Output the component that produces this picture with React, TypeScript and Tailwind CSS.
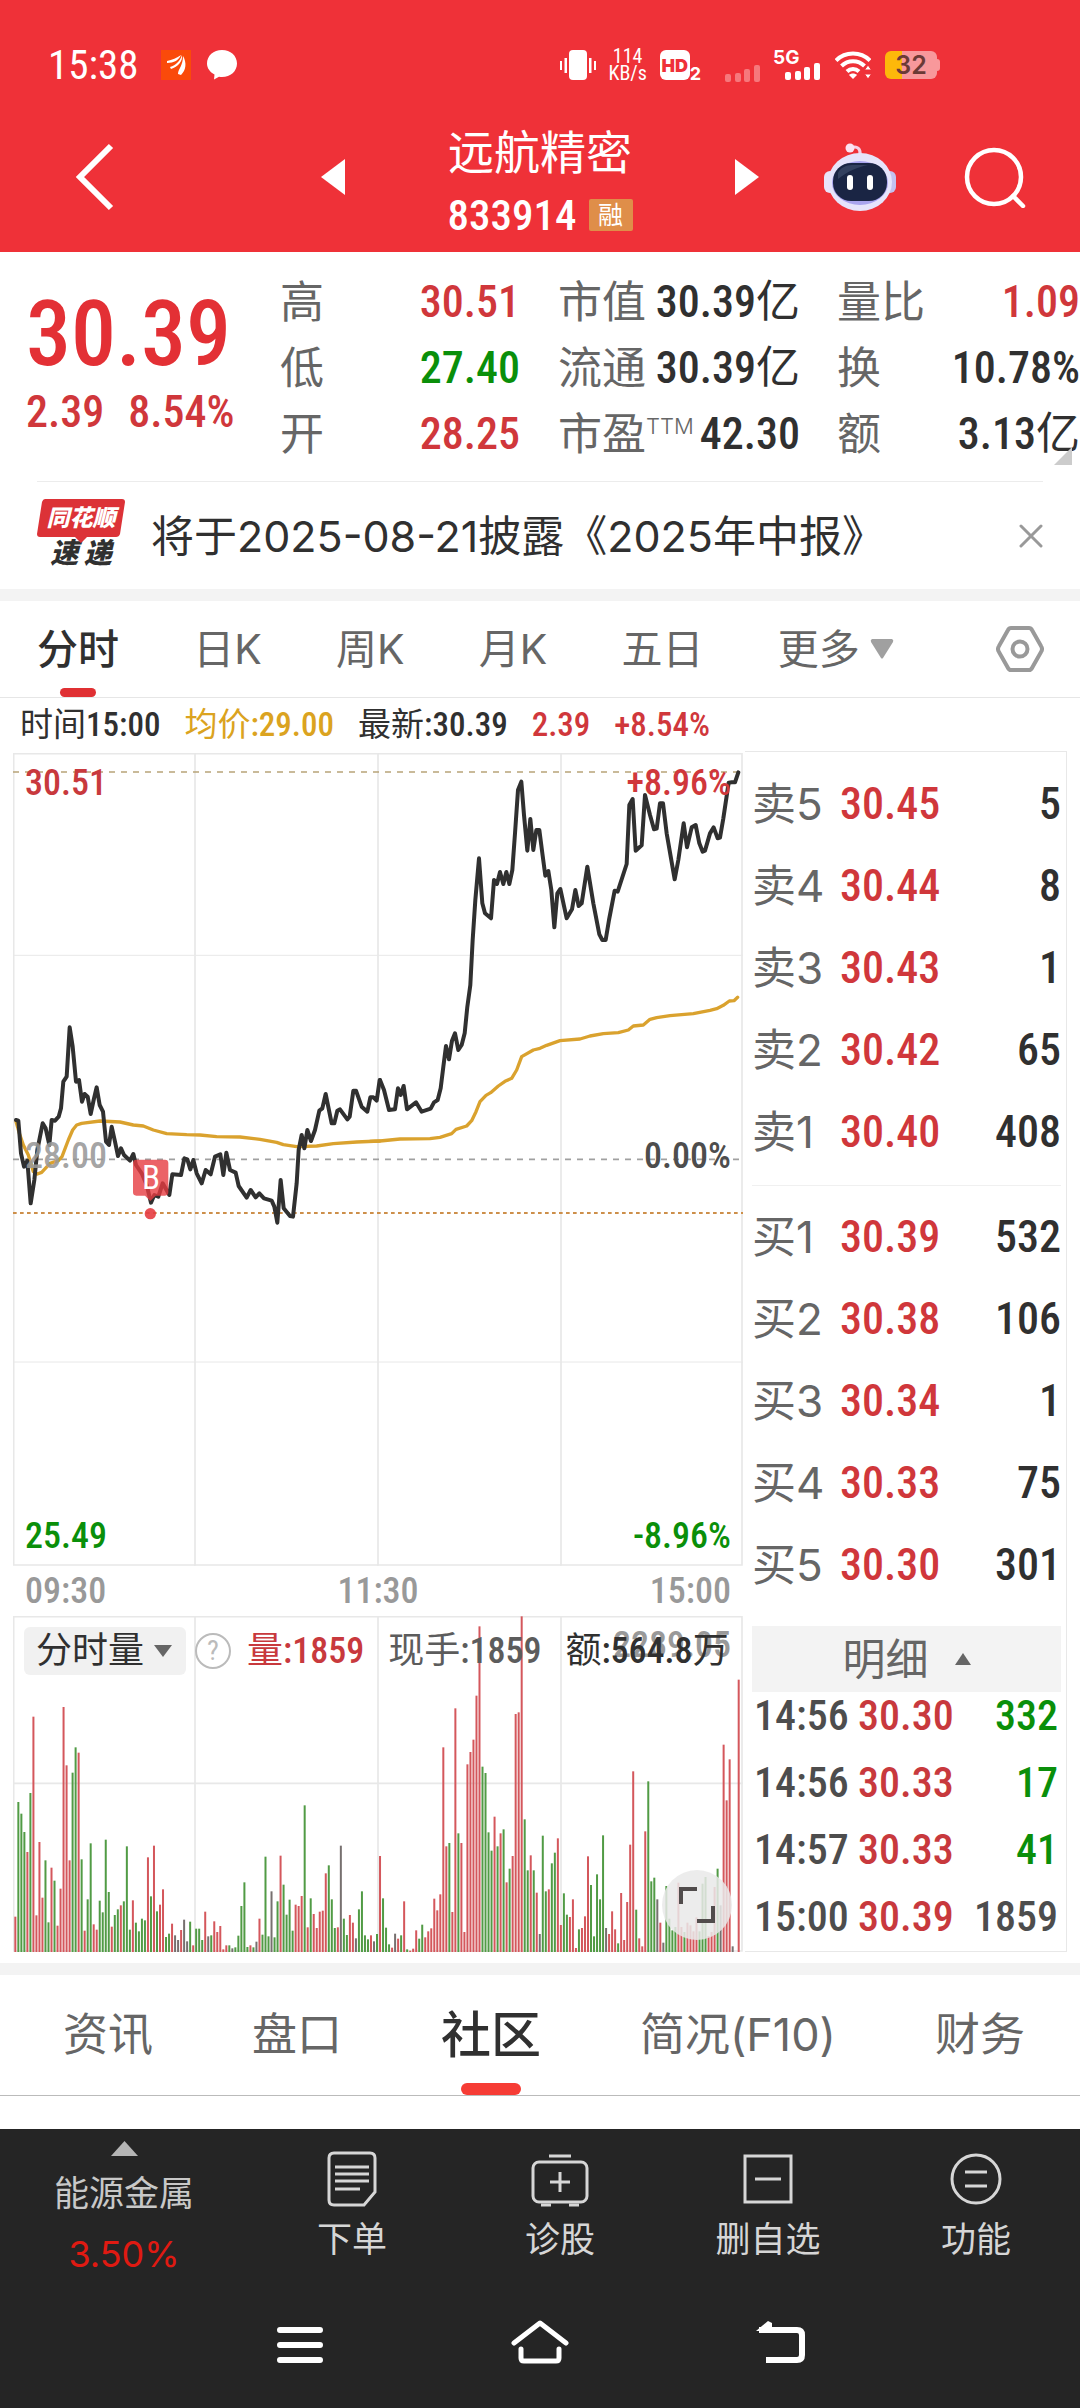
import React from 'react';

const NUM = "font-[family-name:'Roboto_Condensed','Liberation_Sans_Narrow',Roboto,'Noto_Sans_CJK_SC',sans-serif]";

const PERIODS = ['日K', '周K', '月K', '五日'];

const SELLS = [
  ['卖5', '30.45', '5'],
  ['卖4', '30.44', '8'],
  ['卖3', '30.43', '1'],
  ['卖2', '30.42', '65'],
  ['卖1', '30.40', '408'],
];

const BUYS = [
  ['买1', '30.39', '532'],
  ['买2', '30.38', '106'],
  ['买3', '30.34', '1'],
  ['买4', '30.33', '75'],
  ['买5', '30.30', '301'],
];

const TRADES = [
  { time: '14:56', price: '30.30', volume: '332', tone: 'text-[#0a8f0a]' },
  { time: '14:56', price: '30.33', volume: '17', tone: 'text-[#0a8f0a]' },
  { time: '14:57', price: '30.33', volume: '41', tone: 'text-[#0a8f0a]' },
  { time: '15:00', price: '30.39', volume: '1859', tone: 'text-[#4d4d4d]' },
];

// Price and average lines, one polyline per trading session
const PRICE_AM =
  '48,1140 55,1142 63,1240 72,1280 82,1262 92,1390 103,1320 112,1230 120,1190 128,1150 137,1165 148,1215 155,1140 165,1142 176,1130 183,1105 190,1025 200,1010 209,862 218,920 228,1025 237,1020 246,1085 254,1062 263,1070 272,1122 281,1080 290,1042 299,1095 309,1115 318,1205 327,1215 335,1160 345,1205 354,1248 363,1225 372,1245 390,1262 400,1242 408,1275 425,1300 440,1335 453,1388 463,1365 475,1370 488,1330 508,1365 517,1303 543,1305 553,1255 562,1258 571,1288 580,1260 590,1300 605,1330 617,1290 632,1303 645,1250 661,1243 670,1305 679,1238 690,1290 707,1298 716,1338 740,1373 752,1350 767,1372 778,1360 792,1375 815,1382 823,1400 832,1448 842,1320 851,1405 870,1428 879,1430 890,1330 896,1230 905,1185 913,1225 922,1170 933,1203 945,1170 958,1112 967,1105 977,1062 995,1150 1003,1150 1012,1112 1020,1108 1042,1138 1049,1130 1060,1052 1068,1052 1085,1100 1102,1115 1111,1072 1120,1072 1130,1082 1139,1020';
const PRICE_PM =
  '30,1020 42,1050 57,1110 75,1108 84,1045 92,1065 101,1038 111,1108 138,1087 155,1115 182,1106 192,1087 203,1080 212,1045 220,980 228,918 237,958 246,902 255,880 265,930 275,915 284,880 292,800 301,735 308,600 316,480 327,355 337,490 345,520 363,535 372,420 381,432 390,396 400,432 409,396 418,432 427,390 435,280 444,150 454,125 462,225 472,332 481,237 490,330 499,270 508,270 517,340 526,407 535,393 544,450 553,562 562,460 571,447 590,535 606,508 616,450 626,498 635,490 652,380 670,490 688,583 697,600 707,600 717,540 734,452 743,455 770,372 778,195 788,177 797,332 815,316 825,165 840,225 852,268 860,266 870,190 879,190 890,280 914,418 925,360 941,250 951,322 965,262 977,255 988,310 998,335 1005,332 1020,280 1031,262 1043,295 1050,293 1060,235 1076,128 1085,127 1095,127 1105,97';
const AVG_AM =
  '48,1145 58,1180 70,1215 85,1245 100,1295 112,1302 125,1297 150,1270 175,1262 186,1250 205,1200 218,1170 230,1155 245,1150 300,1143 360,1146 400,1155 430,1158 460,1170 500,1181 560,1184 600,1185 650,1190 720,1191 780,1198 830,1207 850,1214 890,1220 950,1218 1000,1211 1070,1206 1139,1203';
const AVG_PM =
  '0,1204 30,1203 90,1197 180,1196 210,1192 245,1181 258,1168 290,1158 305,1142 318,1115 330,1085 348,1066 362,1058 385,1038 405,1024 425,1015 440,990 455,950 490,930 510,925 530,916 570,902 630,897 660,888 700,881 745,878 775,870 790,858 820,855 840,838 860,833 900,827 970,821 1020,811 1040,806 1060,796 1078,783 1092,782 1103,772';

// One entry per minute: direction (r up, g down, k flat) and bar height
const VOLUME = `r106 g450 g415 g360 r300 g477 r706 r110 r330 r163 g275 g89 r253 g214 r79 r190 r735 r560 r275 g538
g614 r598 g278 r64 g158 g326 r83 r67 g154 g119 g337 g180 r76 g111 g128 r140 g152 g317 g67 r155
g88 g62 g100 g95 r284 g167 r319 g122 r142 r188 g45 g55 r85 k50 k36 r66 k97 k32 g91 r20
g70 g70 g36 r121 k47 g50 r92 r60 r78 r8 r20 g20 k11 g14 g49 g138 g209 g15 r20 g14
k31 r100 g52 g286 g47 k182 g44 g152 r289 g202 g112 g157 g64 r142 r138 r168 g440 r74 g161 r114
r72 r121 r124 r236 g260 g158 g72 r74 k319 g100 g51 r111 r88 k41 g128 g182 g50 g38 r50 k32
g54 r288 g161 g73 g23 r13 k55 r40 g50 r152 g8 r4 r10 r65 g40 g82 r44 r62 r71 r160
r125 r173 r614 r317 g327 r120 r731 g356 r327 r60 r563 r600 r637 r769 r977 g556 g537 g359 g304 r406
g317 r356 g368 r209 g250 r288 r714 r719 r1007 g398 g245 r290 g245 r178 k54 g349 g182 r188 g266 g298
r341 r81 g176 g112 r105 r158 r12 g68 r72 r107 r287 g201 g47 g233 g158 g350 k72 r54 r122 r68
g26 r177 r36 r150 r322 r542 g127 r41 r17 r362 g512 g212 g223 k158 r88 k28 g198 g100 g65 g75
r208 r75 g60 r88 r80 r62 r104 g62 g205 g225 r48 r60 r195 g250 k140 r622 r455 r578 k17 k0 r817`
  .split(/\s+/)
  .map((item) => ({ dir: item[0], height: Number(item.slice(1)) }));

const BAR_COLORS: Record<string, string> = { r: '#d4575c', g: '#519b45', k: '#77706f' };

const StatusBar: React.FC = () => (
  <div className="flex h-[92px] items-center justify-between pt-[38px] pr-[140px] pl-12">
    <div className="flex items-center">
      <span className={`${NUM} w-[113px] text-[41px] leading-[44px] text-white`}>15:38</span>
      <svg className="mr-4 h-[30px] w-[30px]" viewBox="0 0 30 30">
        <rect width="30" height="30" fill="#fa4a0a" />
        <path d="M6 11c5-1 10-3 14-6-2 5-7 8-14 8zM9 17c6-2 10-6 12-12 1 6-4 12-11 14zM17 24c0-5 5-8 5-18 4 7 3 14-2 19z" fill="#fff" />
      </svg>
      <svg className="h-[30px] w-[30px]" viewBox="0 0 30 30" fill="#fff">
        <path d="M15 0c8.500 0 15 5.800 15 13.500S23.500 27 15 27c-1 0-2-.1-3-.3L7 29.500l.5-5C3 22 0 18.200 0 13.500 0 5.800 6.500 0 15 0z" />
      </svg>
    </div>
    <div className="flex items-center">
      <svg className="mr-3.5 h-[30px] w-9" viewBox="0 0 36 30" fill="#fff">
        <rect x="9" width="18" height="30" rx="4" />
        <path d="M0 11h2v9H0zM4.500 8H7v15H4.500zM29 8h2.500v15H29zM34 11h2v9h-2z" />
      </svg>
      <div className={`${NUM} mr-3.5 flex w-9 flex-col items-center text-[20px] leading-[17px] text-white`}>
        <span>114</span>
        <span>KB/s</span>
      </div>
      <span className="flex h-[30px] w-[30px] items-center justify-center rounded-md bg-white text-[18px] font-black text-[#ef3138]">HD</span>
      <span className="mr-6 self-end text-[18px] leading-4 font-bold text-white">2</span>
      <svg className="mr-3 h-[17px] w-9 self-end" viewBox="0 0 36 17" fill="#f6787c">
        <rect y="9" width="6" height="8" rx="2" />
        <rect x="10" y="8" width="6" height="9" rx="2" />
        <rect x="19" y="4" width="6" height="13" rx="2" />
        <rect x="29" width="6" height="17" rx="2" />
      </svg>
      <div className="relative mr-3.5 h-[30px] w-12">
        <span className="absolute top-0 left-0 text-[19px] leading-4 font-bold text-white">5G</span>
        <svg className="absolute right-0 bottom-0 h-[17px] w-9" viewBox="0 0 36 17" fill="#fff">
          <rect y="9" width="6" height="8" rx="2" />
          <rect x="10" y="8" width="6" height="9" rx="2" />
          <rect x="19" y="4" width="6" height="13" rx="2" />
          <rect x="29" width="6" height="17" rx="2" />
        </svg>
      </div>
      <svg className="mr-3.5 h-7 w-9" viewBox="0 0 36 28" fill="none" stroke="#fff" strokeWidth="4">
        <path d="M1 9.500C10 0 26 0 35 9.500" />
        <path d="M6.500 15c6.500-6.500 16.500-6.500 23 0" />
        <path d="M12 20.500c3.500-3.500 8.500-3.500 12 0" />
        <path d="M14 24l4 4 4-4c-2-2-6-2-8 0z" fill="#fff" stroke="none" />
        <path d="M33 14l3.500 5h-7zM33 28l3.500-5h-7z" fill="#fff" stroke="#ef3138" strokeWidth="1" />
      </svg>
      <div className="flex items-center">
        <span className="flex h-7 w-[52px] items-center justify-center rounded-md bg-linear-to-r from-[#fdb80a] from-33% to-[#f8989b] to-33% text-[25px] leading-7 font-semibold text-[#6b3a36]">32</span>
        <span className="h-3 w-[3px] rounded-r-sm bg-[#f8989b]" />
      </div>
    </div>
  </div>
);

const NavBar: React.FC = () => (
  <div className="flex h-40 items-center justify-between pt-2.5 pr-[54px] pl-[75px]">
    <button aria-label="返回" className="flex w-[181px] items-center">
      <svg className="h-[68px] w-10" viewBox="0 0 40 68" fill="none" stroke="#fff" strokeWidth="6">
        <path d="M36 3L5 34l31 31" />
      </svg>
    </button>
    <div className="flex items-center gap-[100px]">
      <button aria-label="上一只">
        <svg className="h-9 w-6" viewBox="0 0 24 36" fill="#fff">
          <path d="M24 0v36L0 18z" />
        </svg>
      </button>
      <div className="flex w-[190px] flex-col items-center pt-4">
        <h1 className="text-[46px] leading-[60px] text-white">远航精密</h1>
        <div className="flex items-center gap-3">
          <span className={`${NUM} text-[43px] leading-[66px] font-medium text-white`}>833914</span>
          <span className="flex h-8 w-11 items-center justify-center rounded-xs bg-[#df8e49] text-[25px] leading-8 text-white">融</span>
        </div>
      </div>
      <button aria-label="下一只">
        <svg className="h-9 w-6" viewBox="0 0 24 36" fill="#fff">
          <path d="M0 0v36l24-18z" />
        </svg>
      </button>
    </div>
    <div className="flex items-center gap-[68px]">
      <button aria-label="智能助手">
        <svg className="h-[68px] w-[72px]" viewBox="0 0 72 68">
          <path d="M27 5c6-3 10 1 9 7" fill="none" stroke="#f6cfe6" strokeWidth="3" />
          <circle cx="26" cy="5" r="4.500" fill="#fbe3f2" />
          <rect y="28" width="12" height="22" rx="6" fill="#e9e4fa" />
          <rect x="60" y="28" width="12" height="22" rx="6" fill="#c3c2f0" />
          <ellipse cx="36" cy="39" rx="32" ry="29" fill="#e6e4fb" />
          <ellipse cx="36" cy="40" rx="28" ry="22" fill="#a9a4ee" />
          <rect x="9" y="20" width="54" height="38" rx="18" fill="#1a2544" />
          <path d="M14 30c2-5 8-8 14-8h16c-10 2-20 6-30 14z" fill="#33405f" />
          <rect x="23" y="32" width="6" height="15" rx="3" fill="#fff" />
          <rect x="43" y="32" width="6" height="15" rx="3" fill="#fff" />
        </svg>
      </button>
      <button aria-label="搜索">
        <svg className="h-[62px] w-[62px]" viewBox="0 0 62 62" fill="none" stroke="#fff" strokeWidth="4.500" strokeLinecap="round">
          <circle cx="30" cy="31" r="27" />
          <path d="M49 50l10 10" />
        </svg>
      </button>
    </div>
  </div>
);

const Stat: React.FC<{ label: React.ReactNode; value: string; unit?: string; tone?: string }> = ({
  label,
  value,
  unit,
  tone = 'text-[#303030]',
}) => (
  <div className="flex justify-between whitespace-nowrap">
    <dt className="flex text-[#666]">{label}</dt>
    <dd className={`${NUM} font-medium ${tone}`}>
      {value}
      {unit && <span className="font-normal">{unit}</span>}
    </dd>
  </div>
);

const Quote: React.FC = () => (
  <section className="relative flex h-[229px] items-start pt-[17px] pl-[26px] text-[44px] leading-[66px]">
    <div className={`${NUM} w-[254px] pt-4 text-[#e33035]`}>
      <p className="text-[90px] leading-[100px] font-medium">30.39</p>
      <p className="flex gap-6 text-[44px] leading-[54px] font-medium text-[#d0373b]">
        <span>2.39</span>
        <span>8.54%</span>
      </p>
    </div>
    <dl className="w-[240px]">
      <Stat label="高" value="30.51" tone="text-[#d0373b]" />
      <Stat label="低" value="27.40" tone="text-[#0a8f0a]" />
      <Stat label="开" value="28.25" tone="text-[#d0373b]" />
    </dl>
    <dl className="ml-[38px] w-[242px]">
      <Stat label="市值" value="30.39" unit="亿" />
      <Stat label="流通" value="30.39" unit="亿" />
      <Stat label={<>市盈<span className="text-[22px] leading-[50px] font-light">TTM</span></>} value="42.30" />
    </dl>
    <dl className="ml-[37px] flex-1">
      <Stat label="量比" value="1.09" tone="text-[#d0373b]" />
      <Stat label="换" value="10.78%" />
      <Stat label="额" value="3.13" unit="亿" />
    </dl>
    <svg className="absolute right-2 bottom-4 h-[18px] w-[18px]" viewBox="0 0 18 18" fill="#ccc">
      <path d="M18 0v18H0z" />
    </svg>
  </section>
);

const NewsBanner: React.FC = () => (
  <section className="mx-[37px] flex h-[108px] items-center border-t border-[#ececec]">
    <div className="relative flex w-[88px] flex-col items-center pb-1">
      <svg className="absolute top-0 left-0 h-11 w-[88px]" viewBox="0 0 88 44" fill="#dc3237">
        <path d="M8 0h77q3 0 3 3l-5 32q-1 3-4 3H50l-6 6-6-6H3q-3 0-3-3L5 3q1-3 3-3z" />
      </svg>
      <span className="relative text-[23px] leading-[38px] font-black text-white italic">同花顺</span>
      <span className="text-[28px] leading-[32px] font-black text-[#303030] italic">速 递</span>
    </div>
    <p className="ml-[26px] flex-1 text-[43px] leading-[60px] whitespace-nowrap text-[#303030]">将于2025-08-21披露《2025年中报》</p>
    <button aria-label="关闭">
      <svg className="h-6 w-6" viewBox="0 0 24 24" stroke="#999" strokeWidth="3" strokeLinecap="round">
        <path d="M2 2l20 20M22 2L2 22" />
      </svg>
    </button>
  </section>
);

const PeriodTabs: React.FC = () => (
  <nav className="flex h-[97px] items-center justify-between border-b border-[#e6e6e6] pr-9 pl-[37px] text-[41px] leading-[60px] text-[#666]">
    <button className="relative flex h-full items-center font-medium text-[#303030]">
      分时
      <span className="absolute bottom-0 left-[23px] h-[9px] w-9 rounded-full bg-[#e03033]" />
    </button>
    {PERIODS.map((name) => (
      <button key={name}>{name}</button>
    ))}
    <button className="flex items-center gap-2.5">
      更多
      <svg className="h-5 w-6" viewBox="0 0 24 20" fill="#a0a0a0">
        <path d="M2 0h20q2 1 1 3L13 19q-1 1-2 0L1 3Q0 1 2 0z" />
      </svg>
    </button>
    <button aria-label="设置" className="ml-7">
      <svg className="h-12 w-12" viewBox="0 0 48 48" fill="none" stroke="#999" strokeWidth="4">
        <path d="M15 3h18q2 0 3 2l9 16q2 3 0 6l-9 16q-1 2-3 2H15q-2 0-3-2L3 27q-2-3 0-6l9-16q1-2 3-2z" />
        <circle cx="24" cy="24" r="7.500" />
      </svg>
    </button>
  </nav>
);

const PriceChart: React.FC = () => (
  <div className={`${NUM} relative text-[36px] leading-[42px] font-medium`}>
    <svg className="block h-[813px] w-full" viewBox="0 0 2190 2439" preserveAspectRatio="none" fill="none">
      <g stroke="#e8e8e8" strokeWidth="5">
        <path d="M2 2h2185v2434H2z" />
        <path d="M546 0v2438M1095 0v2438M1644 0v2438" />
        <path d="M0 607h2190M0 1827h2190" strokeWidth="3" />
      </g>
      <path d="M0 57h2190" stroke="#b8a478" strokeWidth="5" strokeDasharray="18 18" />
      <path d="M0 1219h2190" stroke="#a0a0a0" strokeWidth="5" strokeDasharray="18 18" />
      <path d="M0 1380h2190" stroke="#cd8f4a" strokeWidth="6" strokeDasharray="11 10" />
      <g strokeLinejoin="round" strokeLinecap="round">
        <g stroke="#daa22e" strokeWidth="10">
          <polyline points={AVG_AM} transform="translate(-39 -39)" />
          <polyline points={AVG_PM} transform="translate(1071 -39)" />
        </g>
        <g stroke="#303030" strokeWidth="12">
          <polyline points={PRICE_AM} transform="translate(-39 -39)" />
          <polyline points={PRICE_PM} transform="translate(1071 -39)" />
        </g>
      </g>
      <g fill="#e63c41">
        <path d="M370 1220h86q10 0 10 10v88q0 10-10 10h-28l-16 16-16-16h-26q-10 0-10-10v-88q0-10 10-10z" fillOpacity="0.8" />
        <circle cx="412" cy="1382" r="17" fillOpacity="0.9" />
      </g>
    </svg>
    <span className="absolute top-[407px] left-[120px] w-9 text-center text-[33px] leading-9 font-normal text-white">B</span>
    <span className="absolute top-[9px] left-3 text-[#c8393d]">30.51</span>
    <span className="absolute top-[9px] right-3 text-[#d0373b]">+8.96%</span>
    <span className="absolute top-[382px] left-3 text-[#999]/90">28.00</span>
    <span className="absolute top-[382px] right-3 text-[#4d4d4d]">0.00%</span>
    <span className="absolute bottom-[9px] left-3 text-[#0a8f0a]">25.49</span>
    <span className="absolute right-3 bottom-[9px] text-[#0a8f0a]">-8.96%</span>
  </div>
);

const VolumeChart: React.FC = () => (
  <div className="relative">
    <svg className="block h-[336px] w-full" viewBox="0 0 2190 1008" preserveAspectRatio="none" fill="none">
      <g stroke="#e8e8e8" strokeWidth="5">
        <path d="M2 2h2185v1003H2zM0 502h2190M546 0v1008M1095 0v1008M1644 0v1008" />
      </g>
      {VOLUME.map((bar, i) => (
        <rect key={i} x={4 + i * 9.042} y={1008 - bar.height} width="6" height={bar.height} fill={BAR_COLORS[bar.dir]} />
      ))}
    </svg>
    <span className={`${NUM} absolute top-2 right-3 text-[36px] leading-[42px] font-medium text-[#999]`}>2289.05</span>
    <div className={`${NUM} absolute top-[11px] left-[11px] flex items-center text-[36px] leading-[48px] whitespace-nowrap`}>
      <label className="relative mr-[9px]">
        <select aria-label="指标" className="block h-12 w-[162px] appearance-none rounded-md bg-[#f0f0f0]/90 pl-3 text-[#303030]">
          <option>分时量</option>
        </select>
        <svg className="pointer-events-none absolute top-[18px] right-3.5 h-3 w-[18px]" viewBox="0 0 18 12" fill="#666">
          <path d="M0 0h18L9 12z" />
        </svg>
      </label>
      <button aria-label="说明" className="mr-4 flex h-9 w-9 items-center justify-center rounded-full border-2 border-[#bbb] text-[28px] text-[#bbb]">?</button>
      <span className="mr-6 text-[#c8393d]">量<b className="font-medium">:1859</b></span>
      <span className="mr-6 text-[#5c5c5c]">现手<b className="font-medium">:1859</b></span>
      <span className="text-[#303030]">额<b className="font-medium">:564.8</b>万</span>
    </div>
    <button aria-label="全屏" className="absolute right-[11px] bottom-3 flex h-[70px] w-[70px] items-center justify-center rounded-full bg-[#e9e9e9]/85">
      <svg className="h-9 w-9" viewBox="0 0 36 36" fill="none" stroke="#514c4c" strokeWidth="4">
        <path d="M2 17V2h16M34 19v15H18" />
      </svg>
    </button>
  </div>
);

const BookTable: React.FC<{ rows: string[][] }> = ({ rows }) => (
  <table className="w-full text-[44px] leading-[60px] whitespace-nowrap">
    <tbody>
      {rows.map(([label, price, volume]) => (
        <tr key={label} className="h-[82px]">
          <th className="w-[88px] p-0 text-left font-normal text-[#666]">{label}</th>
          <td className={`${NUM} p-0 font-medium text-[#d0373b]`}>{price}</td>
          <td className={`${NUM} p-0 text-right font-medium text-[#303030]`}>{volume}</td>
        </tr>
      ))}
    </tbody>
  </table>
);

const OrderBook: React.FC = () => (
  <aside className="mr-[13px] flex w-[322px] flex-col border-t border-r border-b border-[#e8e8e8] pr-[5px] pl-[7px]">
    <div className="mt-[11px]">
      <BookTable rows={SELLS} />
    </div>
    <div className="mt-3 border-t border-[#f0f0f0] pt-2.5">
      <BookTable rows={BUYS} />
    </div>
    <button className="mt-5 flex h-[66px] items-center justify-center gap-[26px] bg-[#f3f3f3] text-[43px] leading-[60px] text-[#666]">
      明细
      <svg className="h-3 w-4" viewBox="0 0 16 12" fill="#666">
        <path d="M8 0l8 12H0z" />
      </svg>
    </button>
    <table className={`${NUM} mt-[-10px] w-full text-[42px] leading-[50px] font-medium`}>
      <tbody>
        {TRADES.map((trade, i) => (
          <tr key={i} className="h-[67px]">
            <td className="w-[106px] p-0 pl-0.5 text-[#4d4d4d]">{trade.time}</td>
            <td className="p-0 text-[#c8393d]">{trade.price}</td>
            <td className={`p-0 pr-[3px] text-right ${trade.tone}`}>{trade.volume}</td>
          </tr>
        ))}
      </tbody>
    </table>
  </aside>
);

const Market: React.FC = () => (
  <section className="pb-[11px]">
    <div className={`${NUM} flex h-[53px] items-center gap-6 pl-5 text-[33px] leading-[44px] whitespace-nowrap text-[#303030]`}>
      <span>时间<b className="font-medium">15:00</b></span>
      <span className="text-[#dba320]">均价<b className="font-medium">:29.00</b></span>
      <span>最新<b className="font-medium">:30.39</b></span>
      <span className="font-medium text-[#d0373b]">2.39</span>
      <span className="font-medium text-[#d0373b]">+8.54%</span>
    </div>
    <div className="flex">
      <div className="min-w-0 flex-1 pt-0.5 pr-0.5 pl-[13px]">
        <PriceChart />
        <div className={`${NUM} flex h-[50px] items-center justify-between px-3 text-[36px] leading-[42px] font-medium text-[#999]`}>
          <span>09:30</span>
          <span>11:30</span>
          <span>15:00</span>
        </div>
        <VolumeChart />
      </div>
      <OrderBook />
    </div>
  </section>
);

const InfoTabs: React.FC = () => (
  <nav className="flex h-[121px] items-center justify-between border-b border-[#bbb] pr-[55px] pl-[63px] text-[45px] leading-[60px] text-[#666]">
    <button>资讯</button>
    <button>盘口</button>
    <button className="relative flex h-full items-center text-[50px] font-medium text-[#303030]">
      社区
      <span className="absolute bottom-0 left-5 h-3 w-[60px] rounded-full bg-[#f63c35]" />
    </button>
    <button>简况(F10)</button>
    <button>财务</button>
  </nav>
);

const BottomBar: React.FC = () => (
  <footer className="bg-[#252525] pb-11 text-[35px] leading-[42px] text-[#d6d6d6]">
    <div className="grid h-[191px] grid-cols-[248fr_208fr_208fr_208fr_208fr]">
      <button className="flex flex-col items-center pt-3">
        <svg className="h-[15px] w-[27px]" viewBox="0 0 27 15" fill="#b5b5b5">
          <path d="M13.500 0L27 15H0z" />
        </svg>
        <span className="mt-4 text-[#c8c8c8]">能源金属</span>
        <span className="mt-[19px] text-[36px] text-[#e01a12]">3.50%</span>
      </button>
      <button className="flex flex-col items-center gap-[11px] pt-[22px]">
        <svg className="h-14 w-[50px]" viewBox="0 0 50 56" fill="none" stroke="#d6d6d6" strokeWidth="3">
          <path d="M7 2h36q5 0 5 5v34L37 54H7q-5 0-5-5V7q0-5 5-5z" />
          <path d="M8 16h34M8 23h34M8 30h34M8 38h25" />
        </svg>
        下单
      </button>
      <button className="flex flex-col items-center gap-[11px] pt-[22px]">
        <svg className="h-14 w-[58px]" viewBox="0 0 58 56" fill="none" stroke="#d6d6d6" strokeWidth="3">
          <path d="M18 5h22M10 54h10M38 54h10" />
          <rect x="2" y="11" width="54" height="40" rx="6" />
          <path d="M29 21v20M19 31h20" />
        </svg>
        诊股
      </button>
      <button className="flex flex-col items-center gap-[11px] pt-[22px]">
        <svg className="h-14 w-[50px]" viewBox="0 0 50 56" fill="none" stroke="#d6d6d6" strokeWidth="3">
          <rect x="2" y="5" width="46" height="46" />
          <path d="M12 28h26" />
        </svg>
        删自选
      </button>
      <button className="flex flex-col items-center gap-[11px] pt-[22px]">
        <svg className="h-14 w-[54px]" viewBox="0 0 54 56" fill="none" stroke="#d6d6d6" strokeWidth="3">
          <circle cx="27" cy="28" r="24" />
          <path d="M16 21h22M16 35h22" />
        </svg>
        功能
      </button>
    </div>
    <div className="flex items-center justify-center gap-[186px]">
      <button aria-label="最近任务">
        <svg className="h-11 w-[50px]" viewBox="0 0 50 44" stroke="#fff" strokeWidth="6" strokeLinecap="round">
          <path d="M5 10h40M5 25h40M5 40h40" />
        </svg>
      </button>
      <button aria-label="主页">
        <svg className="h-11 w-[58px]" viewBox="0 0 58 44" fill="none" stroke="#fff" strokeWidth="5" strokeLinecap="round" strokeLinejoin="round">
          <path d="M3 23L29 3l26 20M10 29v9q0 3 3 3h32q3 0 3-3v-9" />
        </svg>
      </button>
      <button aria-label="后退">
        <svg className="h-11 w-[50px]" viewBox="0 0 50 44" fill="none" stroke="#fff" strokeWidth="6">
          <path d="M4 10h38q5 0 5 5v20q0 5-5 5H11" />
          <path d="M1 11L13 1l4 2v8z" fill="#fff" stroke="none" />
        </svg>
      </button>
    </div>
  </footer>
);

const App: React.FC = () => {
  return (
    <div className="w-full bg-white font-[family-name:Inter,'Noto_Sans_CJK_SC',sans-serif]">
      {/* Header */}
      <header className="bg-[#ef3138]">
        <StatusBar />
        <NavBar />
      </header>

      <Quote />
      <NewsBanner />
      <div className="h-3 bg-[#f3f3f3]" />

      {/* Intraday chart and order book */}
      <PeriodTabs />
      <Market />
      <div className="h-3 bg-[#f3f3f3]" />

      <InfoTabs />
      <div className="h-[33px]" />
      <BottomBar />
    </div>
  );
};

export default App;
